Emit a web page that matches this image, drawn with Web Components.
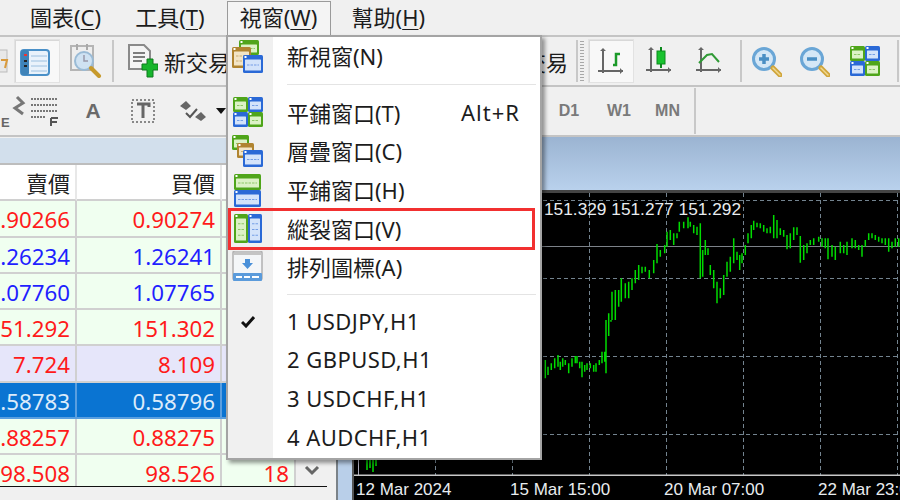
<!DOCTYPE html>
<html>
<head>
<meta charset="utf-8">
<title>MT4</title>
<style>
html, body { margin: 0; height: 100%; overflow: hidden; background: #f0f0f0; }
body { font-family: "Noto Sans", "Noto Sans CJK TC", sans-serif; color: #1c1c1c; }
</style>
</head>
<body>
<mt-app>
  <mt-menubar></mt-menubar>
  <mt-toolbar-one></mt-toolbar-one>
  <mt-toolbar-two></mt-toolbar-two>
  <mt-main>
    <mt-quotes></mt-quotes>
    <mt-chart></mt-chart>
  </mt-main>
  <mt-window-menu>
    <mt-menu-item icon="fresh">新視窗(N)</mt-menu-item>
    <mt-menu-sep style="height:18px"></mt-menu-sep>
    <mt-menu-item icon="tile" hint="Alt+R">平鋪窗口(T)</mt-menu-item>
    <mt-menu-item icon="cascade">層疊窗口(C)</mt-menu-item>
    <mt-menu-item icon="horiz">平鋪窗口(H)</mt-menu-item>
    <mt-menu-item icon="vert" marked>縱裂窗口(V)</mt-menu-item>
    <mt-menu-item icon="arrange">排列圖標(A)</mt-menu-item>
    <mt-menu-sep style="height:16px"></mt-menu-sep>
    <mt-menu-item icon="check" style="letter-spacing:.45px">1 USDJPY,H1</mt-menu-item>
    <mt-menu-item style="letter-spacing:.45px">2 GBPUSD,H1</mt-menu-item>
    <mt-menu-item style="letter-spacing:.45px">3 USDCHF,H1</mt-menu-item>
    <mt-menu-item style="letter-spacing:.45px">4 AUDCHF,H1</mt-menu-item>
  </mt-window-menu>
</mt-app>

<script>
// small window glyph used by most of the icons
function win(x, y, w, h, c, tint) {
  let rows = Math.max(1, Math.floor((h - 6) / 7))
  let lines = ''
  for (let i = 0; i < rows; i++) {
    let ly = y + 4 + (h - 6) * (i + 1) / (rows + 1)
    lines += `<path d="M${x + 4} ${ly}H${x + w - 4}" stroke="${c}" stroke-width="1.200" stroke-dasharray="2.500 1" opacity=".55"/>`
  }
  return `<rect x="${x}" y="${y}" width="${w}" height="${h}" rx="1.500" fill="${c}"/>
    <rect x="${x + 2}" y="${y + 4.5}" width="${w - 4}" height="${h - 7}" rx=".5" fill="${tint}"/>
    <rect x="${x + 1.5}" y="${y + 1}" width="2" height="2" fill="#fff"/>${lines}`
}
const green = (x, y, w, h) => win(x, y, w, h, '#4fa51a', '#dcf2c6')
const blue = (x, y, w, h) => win(x, y, w, h, '#2a69d6', '#d3e3fa')
const tan = (x, y, w, h) => win(x, y, w, h, '#b08430', '#f3e5c6')

function mag(sign) {
  let mark = sign == '+'
    ? '<path d="M8 13h10M13 8v10" stroke="#4a8fc4" stroke-width="3.500"/>'
    : '<path d="M8 13h10" stroke="#4a8fc4" stroke-width="3.500"/>'
  return `<circle cx="13" cy="13" r="10.500" fill="#d4e7f6" stroke="#6aa6d6" stroke-width="3"/>${mark}
    <path d="M22 22l7 7" stroke="#d0a53a" stroke-width="5" stroke-linecap="round"/>
    <path d="M22 22l7 7" stroke="#f0d890" stroke-width="1.500" stroke-linecap="round"/>`
}
function axes() {
  return '<path d="M5 2v24M0 24h25" stroke="#666" stroke-width="2"/><path d="M2 4l3-3 3 3M22 21l3 3-3 3" fill="#666"/>'
}

const ICONS = {
  fresh: [32, 33, green(7, 0, 20, 15) + tan(0, 7, 19, 21) + blue(11, 15, 20, 18)],
  tile: [31, 31, green(0, 0, 15, 15) + blue(15, 0, 15, 15) + blue(0, 15, 15, 15) + green(15, 15, 15, 15)],
  cascade: [32, 33, green(0, 0, 17, 15) + tan(5, 8, 17, 15) + blue(11, 15, 20, 17)],
  horiz: [30, 33, green(1, 0, 27, 16) + blue(1, 16, 27, 17)],
  vert: [30, 30, green(1, 0, 14, 29) + blue(15, 0, 14, 29)],
  arrange: [32, 32, `<rect x="1" y="0" width="29" height="29" rx="2" fill="#f4f6f8" stroke="#b0b0b0" stroke-width="1.500"/>
    <path d="M2 1h27v3H2z" fill="#c4c4c4"/><path d="M13 8h5v4h3l-5.500 6-5.500-6h3z" fill="#4a90d9"/>
    <rect x="1" y="22" width="29" height="8" rx="1" fill="#5b9bdb"/><path d="M4 26h6M12 26h6M20 26h7" stroke="#fff" stroke-width="2"/>`],
  check: [14, 12, '<path d="M1 6l4 4 8-9" fill="none" stroke="#111" stroke-width="3"/>'],
  list: [30, 27, `<rect x="1" y="1" width="28" height="25" rx="3" fill="#e9f2fb" stroke="#4a90c8" stroke-width="2"/>
    <rect x="1" y="1" width="8" height="25" rx="2" fill="#3f83b8"/>
    <path d="M11 7h16M11 12h16M11 17h16M11 22h16" stroke="#9cc0e0"/><path d="M4 6h3" stroke="#e33" stroke-width="2"/>
    <path d="M4 12h3M4 17h3" stroke="#222" stroke-width="2"/>`],
  history: [32, 34, `<rect x="1" y="2" width="22" height="24" fill="#eee" stroke="#b5b5b5" stroke-width="2"/>
    <path d="M7 0v6M17 0v6" stroke="#aaa" stroke-width="2"/>
    <circle cx="14" cy="17" r="9" fill="#cfe2f2" stroke="#9abbd6" stroke-width="2"/><path d="M14 11v6h4" fill="none" stroke="#99a" stroke-width="1.500"/>
    <path d="M21 24l8 8" stroke="#c79a2c" stroke-width="4" stroke-linecap="round"/>`],
  order: [30, 34, `<path d="M1 1h15l6 6v18H1z" fill="#f4f4f4" stroke="#8a8a8a" stroke-width="2"/>
    <path d="M5 9h12M5 13h12M5 17h9" stroke="#555" stroke-width="1.500"/>
    <path d="M14 20h5v-5h6v5h5v6h-5v7h-6v-7h-5z" fill="#17b52c" stroke="#0e7a1c"/>`],
  bars: [27, 30, axes() + '<path d="M15 18h3V7h4" fill="none" stroke="#1c9a2a" stroke-width="2.500"/>'],
  candle: [27, 30, axes() + '<path d="M15 1v21" stroke="#0a8a1c" stroke-width="2"/><rect x="11" y="5" width="8" height="13" fill="#18c22e" stroke="#0a8a1c"/>'],
  line: [27, 30, axes() + '<path d="M3 17l8-8 5-1 7 8" fill="none" stroke="#2f9a35" stroke-width="2"/>'],
  zoomin: [31, 31, mag('+')],
  zoomout: [31, 31, mag('-')],
  gridF: [29, 30, `<path d="M1 3h26M1 9h26M1 15h26M1 21h14" stroke="#777" stroke-width="2" stroke-dasharray="2 1"/>
    <path d="M21 22h7M21 22v8M21 26h6" fill="none" stroke="#555" stroke-width="2"/>`],
  textT: [25, 26, `<rect x="1" y="2" width="22" height="22" fill="none" stroke="#888" stroke-width="2" stroke-dasharray="2 2"/>
    <path d="M6 6h12v3M12 6v14" fill="none" stroke="#666" stroke-width="3"/>`],
  shapes: [27, 22, `<path d="M0 6l6-5 5 5-5 4zM15 17l6-5 5 5-5 4z" fill="#666"/><path d="M6 13l4 4 7-8" fill="none" stroke="#555" stroke-width="2"/>`],
  partE: [26, 32, `<path d="M16 2l6 6-8 5 8 6" fill="none" stroke="#777" stroke-width="3"/>
    <text x="0" y="32" font-size="13" font-weight="700" fill="#666" font-family="Liberation Sans">E</text>`],
  partOrange: [10, 26, '<rect x="-8" y="2" width="15" height="22" fill="#e8e8e8" stroke="#bbb"/><path d="M1 12l6 0-2 8" fill="none" stroke="#d99a3c" stroke-width="2"/>']
}

function iconSvg(name) {
  let [w, h, body] = ICONS[name]
  return `<svg width="${w}" height="${h}" viewBox="0 0 ${w} ${h}" aria-hidden="true">${body}</svg>`
}

// base class: every element just fills its shadow root from a string
class Shadowed extends HTMLElement {
  constructor(html) {
    super()
    this.attachShadow({ mode: 'open' })
    this.shadowRoot.innerHTML = html
  }
}

class MtApp extends Shadowed {
  constructor() {
    super(`<style>
      :host { display: flex; flex-direction: column; position: relative; width: 900px; height: 500px; overflow: hidden; background: #f0f0f0; }
    </style><slot></slot>`)
  }
}

class MtMenubar extends Shadowed {
  constructor() {
    super(`<style>
      :host { display: flex; height: 35px; flex: none; padding-left: 18px; gap: 10px; background: #f0f0f0; box-sizing: border-box; font-size: 22px; }
      span { padding: 0 12px; height: 34px; box-sizing: border-box; margin-top: 1px; white-space: nowrap; line-height: 32px; }
      u { text-underline-offset: 3px; text-decoration-thickness: 1px; }
      .open { border: 1px solid #9a9a9a; border-bottom: 0; background: #f4f4f4; line-height: 30px; width: 104px; text-align: center; padding: 0; }
      .last { margin-left: -1px; }
    </style>
    <span>圖表(<u>C</u>)</span><span>工具(<u>T</u>)</span><span class="open">視窗(<u>W</u>)</span><span class="last">幫助(<u>H</u>)</span>`)
  }
}

const BAR_STYLE = `
  :host { display: flex; flex: none; align-items: center; height: 48px; border-top: 2px solid #c4c4c4; box-sizing: content-box; background: #f0f0f0; overflow: hidden; }
  .t { display: flex; align-items: center; justify-content: center; flex: none; height: 44px; box-sizing: border-box; }
  .on { background: #f8f8f8; outline: 1px solid #e2e2e2; outline-offset: -1px; border-left: 2px solid #d8d8d8; border-top: 2px solid #d8d8d8; }
  .sep { width: 2px; height: 42px; background: #c8c8c8; flex: none; }
  .grip { width: 4px; height: 40px; flex: none; background: repeating-linear-gradient(#a8a8a8 0 1px, #f0f0f0 1px 3px); }
  .lbl { font-size: 22px; white-space: nowrap; flex: none; }
  .tf { font-size: 16px; font-family: "Liberation Sans", sans-serif; color: #7a7a7a; font-weight: 700; flex: none; text-align: center; }
  svg { display: block; flex: none; }
`

class MtToolbarOne extends Shadowed {
  constructor() {
    super(`<style>${BAR_STYLE}</style>
      <div class="t" style="width:14px;justify-content:flex-start">${iconSvg('partOrange')}</div>
      <div class="t on" style="width:46px;justify-content:flex-start;padding-left:4px">${iconSvg('list')}</div>
      <div class="t" style="width:52px">${iconSvg('history')}</div>
      <div class="sep"></div>
      <div class="t" style="width:14px"></div>
      <div class="t" style="width:36px;justify-content:flex-start">${iconSvg('order')}</div>
      <div class="lbl" style="width:354px">新交易</div>
      <div class="lbl" style="width:50px;text-align:right">交易</div>
      <div class="t" style="width:8px"></div>
      <div class="sep"></div>
      <div class="t" style="width:2px"></div>
      <div class="grip"></div>
      <div class="t" style="width:4px"></div>
      <div class="t on" style="width:46px;justify-content:flex-start;padding-left:8px">${iconSvg('bars')}</div>
      <div class="t" style="width:50px">${iconSvg('candle')}</div>
      <div class="t" style="width:50px">${iconSvg('line')}</div>
      <div class="t" style="width:6px"></div>
      <div class="sep"></div>
      <div class="t" style="width:48px">${iconSvg('zoomin')}</div>
      <div class="t" style="width:49px">${iconSvg('zoomout')}</div>
      <div class="t" style="width:52px">${iconSvg('tile')}</div>
      <div class="t" style="width:6px"></div>
      <div class="sep"></div>
      <div class="t" style="width:4px"></div>
      <div class="sep"></div>`)
  }
}

class MtToolbarTwo extends Shadowed {
  constructor() {
    super(`<style>${BAR_STYLE}
      .a { font: 700 21px "Liberation Sans", sans-serif; color: #6a6a6a; }
      .arrow { width: 0; height: 0; border: 5px solid transparent; border-top: 6px solid #111; border-bottom: 0; flex: none; }
    </style>
      <div class="t" style="width:27px">${iconSvg('partE')}</div>
      <div class="t" style="width:34px">${iconSvg('gridF')}</div>
      <div class="t a" style="width:64px">A</div>
      <div class="t" style="width:36px">${iconSvg('textT')}</div>
      <div class="t" style="width:14px"></div>
      <div class="t" style="width:36px">${iconSvg('shapes')}</div>
      <div class="t" style="width:5px"></div>
      <div class="arrow"></div>
      <div class="t" style="width:318px"></div>
      <div class="tf" style="width:50px">D1</div>
      <div class="tf" style="width:50px">W1</div>
      <div class="tf" style="width:47px">MN</div>
      <div class="t" style="width:3px"></div>
      <div class="sep" style="height:46px"></div>`)
  }
}

class MtMain extends Shadowed {
  constructor() {
    super(`<style>
      :host { display: flex; flex: 1; min-height: 0; border-top: 2px solid #c4c4c4; gap: 9px; background: #f0f0f0; }
    </style><slot></slot>`)
  }
}

const QUOTES = [
  ['0.90266', '0.90274', '', 'red'],
  ['1.26234', '1.26241', '', 'blue'],
  ['1.07760', '1.07765', '', 'blue'],
  ['151.292', '151.302', '', 'red'],
  ['7.724', '8.109', '', 'red cfd'],
  ['0.58783', '0.58796', '', 'sel'],
  ['0.88257', '0.88275', '', 'red'],
  ['98.508', '98.526', '18', 'red']
]

class MtQuotes extends Shadowed {
  constructor() {
    let rows = QUOTES.map(q => `<div class="c ${q[3]}">${q[0]}</div><div class="c ${q[3]}">${q[1]}</div><div class="c ${q[3]}">${q[2]}</div>`).join('')
    super(`<style>
      :host { display: flex; flex-direction: column; flex: none; width: 327px; height: 365px; }
      .title { height: 25px; margin-top: 1px; background: #d2dfec; border-bottom: 2px solid #bdbdbd; flex: none; }
      .wrap { display: flex; height: 321px; flex: none; overflow: hidden; border-bottom: 1px solid #111; background: #fff; }
      .grid { display: grid; grid-template-columns: 77px 145px 74px; grid-auto-rows: 36.300px; width: 296px; flex: none; }
      .c { box-sizing: border-box; padding-right: 5px; white-space: nowrap; font-size: 22.300px; line-height: 37px; background: #f0fff0; border-right: 2px solid #d0d0d0; border-bottom: 2px solid #d0d0d0; min-width: 0; display: flex; justify-content: flex-end; }
      .h { background: #fff; font-size: 22px; color: #222; border-right: 2px solid #e8e8e8; border-bottom: 2px solid #d0d0d0; line-height: 36px; }
      .red { color: #ff1a1a; }
      .blue { color: #1f1fff; }
      .cfd { background: #e6e6fa; }
      .sel { background: #0a74d2; color: #dcebfa; border-color: #5a9fe0; }
      .scroll { flex: 1; display: flex; align-items: flex-end; justify-content: center; background: #f0f0f0; padding-bottom: 9px; }
    </style>
    <div class="title"></div>
    <div class="wrap">
      <div class="grid">
        <div class="c h">賣價</div><div class="c h">買價</div><div class="c h"></div>
        ${rows}
      </div>
      <div class="scroll"><svg width="16" height="12" viewBox="0 0 16 12"><path d="M2 2l6 6 6-6" fill="none" stroke="#666" stroke-width="3"/></svg></div>
    </div>`)
  }
}

// chart bars as read off the picture, [x, top, bottom] at 3x, offset by ox/oy
const UPPER = [[200,550,570],[210,485,570],[220,480,570],[230,480,530],[238,445,515],[250,460,505],[260,455,505],[270,445,480],[280,420,460],[290,405,450],[300,410,430],[310,410,425],[322,420,445],[335,390,430],[345,342,400],[355,360,380],[368,345,370],[375,305,350],[385,300,330],[395,310,345],[405,310,325],[412,275,305],[425,275,295],[438,262,295],[445,275,290],[455,285,310],[465,290,315],[475,280,445],[482,360,440],[490,330,375],[498,355,375],[505,405,435],[515,420,475],[525,455,520],[535,475,505],[545,435,495],[555,395,440],[565,380,425],[575,325,400],[585,365,390],[593,375,420],[600,370,400],[610,345,375],[618,310,340],[628,285,325],[635,272,300],[645,278,292],[655,280,295],[665,285,305],[675,295,310],[685,290,310],[695,255,325],[705,270,325],[715,295,315],[725,300,320],[735,315,358],[745,310,355],[755,292,330],[765,292,315],[775,318,398],[785,345,390],[795,340,370],[805,330,345],[815,325,345],[830,320,335],[840,325,350],[850,325,355],[858,325,388],[870,345,380],[880,350,390],[895,335,370],[905,345,370],[915,335,375],[930,325,355],[940,330,355],[950,345,360],[960,345,380],[970,330,350],[980,310,330],[990,310,325],[1000,315,330],[1010,320,335],[1020,325,340],[1030,325,345],[1040,325,365],[1050,335,355],[1060,325,350],[1070,325,350],[1078,335,350]]
const LOWER = [[10,120,175],[18,140,165],[28,130,150],[38,115,145],[48,105,140],[55,125,150],[62,115,140],[70,120,135],[80,130,160],[90,115,140],[100,108,130],[105,108,130],[113,125,145],[120,125,172],[128,135,155],[135,130,150],[145,130,145],[155,135,155],[162,130,155],[172,120,135],[180,95,130],[188,95,125],[192,0,160],[200,0,48],[207,0,5]]

function barPath(list, ox, oy) {
  return list.map(b => `M${(ox + b[0] / 3).toFixed(1)} ${(oy + b[1] / 3).toFixed(1)}V${(oy + b[2] / 3).toFixed(1)}`).join('')
}

class MtChart extends Shadowed {
  constructor() {
    let vert = [356, 433, 510, 587, 664, 741, 818, 895].map(x => `M${x + .5} 193V476`).join('')
    let horiz = [200, 278, 356, 434].map(y => `M352 ${y + .5}H900`).join('')
    let bars = barPath(UPPER, 540, 130) + barPath(LOWER, 540, 320) + 'M365 458V470M368 456V468M371 460V472M374 458V466'
    super(`<style>
      :host { display: grid; flex: 1; grid-template-columns: 14px 2px 1fr; grid-template-rows: 53px 3px 1fr; min-width: 0; position: relative; background: #b9cfe9; border-left: 2px solid #7b8288; }
      .head { grid-column: 1 / 4; background: linear-gradient(#9bb4d2, #b9d1ec); }
      .rule { grid-column: 1 / 4; background: #444; }
      .edge { background: #555; }
      .plot { position: relative; background: #000; font-family: "Liberation Sans", Tahoma, sans-serif; color: #e8ecef; overflow: hidden; display: flex; flex-direction: column; }
      svg { display: block; flex: none; }
      .price { position: absolute; left: 190px; top: 6px; font-size: 17.300px; white-space: nowrap; }
      .axis { display: grid; grid-template-columns: 2px repeat(4, 154px); font-size: 17px; line-height: 28px; white-space: nowrap; }
    </style>
    <div class="head"></div><div class="rule"></div>
    <div></div><div class="edge"></div>
    <div class="plot">
      <svg width="548" height="283" viewBox="352 193 548 283">
        <path d="${vert}${horiz}" stroke="#73838f" stroke-dasharray="4 3" fill="none"/>
        <path d="M352 246.500H900" stroke="#7c8289" stroke-width="1"/>
        <path d="${bars}" stroke="#00dc00" stroke-width="1.500" fill="none"/>
        <path d="M356.500 193V476" stroke="#aab" fill="none"/>
        <path d="M352 475.500H900" stroke="#c8c8c8" fill="none" stroke-width="2"/>
      </svg>
      <div class="price">151.329 151.277 151.292</div>
      <div class="axis"><span></span><span>12 Mar 2024</span><span>15 Mar 15:00</span><span>20 Mar 07:00</span><span>22 Mar 23:00</span></div>
    </div>`)
  }
}

class MtWindowMenu extends Shadowed {
  constructor() {
    super(`<style>
      :host { display: block; position: absolute; left: 226px; top: 35px; width: 316px; height: 425px; box-sizing: border-box; border: 2px solid #a4a4a4; background: #fff; box-shadow: 3px 3px 4px rgba(0,0,0,.4);
        background-image: linear-gradient(90deg, #f0f0f0 45px, #fff 45px); }
    </style><slot></slot>`)
  }
}

class MtMenuItem extends Shadowed {
  constructor() {
    super(`<style>
      :host { display: flex; align-items: center; position: relative; height: 38.600px; font-size: 22px; white-space: nowrap; }
      .ic { width: 40px; margin-right: 5px; flex: none; display: flex; justify-content: center; align-items: center; }
      .txt { margin-left: 14px; flex: 1; padding-bottom: 2px; }
      .hint { margin-right: 20px; letter-spacing: 1px; padding-bottom: 2px; }
      .mark { display: none; position: absolute; left: 0; top: -1px; width: 307px; height: 42px; box-sizing: border-box; border: 3px solid #f23030; }
      :host([marked]) .mark { display: block; }
    </style>
    <div class="ic"></div><div class="txt"><slot></slot></div><div class="hint"></div><div class="mark"></div>`)
  }
  connectedCallback() {
    let icon = this.getAttribute('icon')
    if (icon) this.shadowRoot.querySelector('.ic').innerHTML = iconSvg(icon)
    this.shadowRoot.querySelector('.hint').textContent = this.getAttribute('hint') || ''
  }
}

class MtMenuSep extends Shadowed {
  constructor() {
    super(`<style>
      :host { display: flex; align-items: center; height: 17px; }
      div { margin-left: 59px; margin-right: 4px; flex: 1; height: 1px; background: #e4e4e4; }
    </style><div></div>`)
  }
}

customElements.define('mt-app', MtApp)
customElements.define('mt-menubar', MtMenubar)
customElements.define('mt-toolbar-one', MtToolbarOne)
customElements.define('mt-toolbar-two', MtToolbarTwo)
customElements.define('mt-main', MtMain)
customElements.define('mt-quotes', MtQuotes)
customElements.define('mt-chart', MtChart)
customElements.define('mt-window-menu', MtWindowMenu)
customElements.define('mt-menu-item', MtMenuItem)
customElements.define('mt-menu-sep', MtMenuSep)
</script>
</body>
</html>
